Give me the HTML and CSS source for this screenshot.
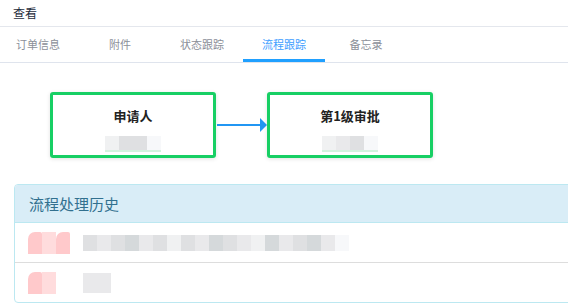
FILE: index.html
```html
<!DOCTYPE html>
<html>
<head>
    <title>查看</title>
    <link rel="stylesheet" href="styles.css">
</head>
<body>
    <div class="dialog-title">查看</div>

    <!-- 标签页 -->
    <div class="tabs">
        <div class="tab">订单信息</div>
        <div class="tab">附件</div>
        <div class="tab">状态跟踪</div>
        <div class="tab active">流程跟踪</div>
        <div class="tab">备忘录</div>
    </div>

    <!-- 流程图 -->
    <div class="flow">
        <div class="node">
            <div class="node-name">申请人</div>
            <div class="mosaic small">
                <span class="m3"></span><span class="m1"></span><span class="m1"></span><span class="m4"></span>
            </div>
        </div>
        <svg class="arrow" width="51" height="16" viewBox="0 0 51 16">
            <line x1="1" y1="8" x2="44" y2="8" stroke="#2196f3" stroke-width="2"/>
            <path d="M44 1 L51 8 L44 15 Z" fill="#2196f3"/>
        </svg>
        <div class="node">
            <div class="node-name">第1级审批</div>
            <div class="mosaic small">
                <span class="m3"></span><span class="m2"></span><span class="m1"></span><span class="m4"></span>
            </div>
        </div>
    </div>

    <!-- 流程处理历史 -->
    <div class="panel">
        <div class="panel-heading">流程处理历史</div>
        <div class="panel-row">
            <div class="avatar"><span></span><span class="light"></span><span></span></div>
            <div class="mosaic line">
                <span class="m1"></span><span class="m2"></span><span class="m1"></span><span class="m5"></span>
                <span class="m2"></span><span class="m1"></span><span class="m3"></span><span class="m1"></span>
                <span class="m2"></span><span class="m5"></span><span class="m1"></span><span class="m2"></span>
                <span class="m3"></span><span class="m5"></span><span class="m2"></span><span class="m1"></span>
                <span class="m5"></span><span class="m2"></span><span class="m4"></span>
            </div>
        </div>
        <div class="panel-row">
            <div class="avatar"><span></span><span class="light"></span></div>
            <div class="mosaic short">
                <span class="m2"></span><span class="m2"></span>
            </div>
        </div>
    </div>
</body>
</html>
```
FILE: styles.css
```css
body {
    margin: 0;
    background-color: #fff;
    font-family: "Noto Sans CJK SC", "Liberation Sans", sans-serif;
    color: #303133;
    overflow: hidden;
}

.dialog-title {
    height: 26px;
    line-height: 26px;
    padding-left: 13px;
    font-size: 12px;
    color: #1f2d3d;
    border-bottom: 1px solid #e4e7ed;
}

.tabs {
    display: flex;
    margin-left: -3px;
    height: 35px;
    border-bottom: 1px solid #dfe4ed;
}

.tab {
    width: 82px;
    text-align: center;
    font-size: 11px;
    line-height: 34px;
    color: #8b8f99;
    box-sizing: border-box;
}

.tab.active {
    color: #409eff;
    border-bottom: 3px solid #20a0ff;
}

.flow {
    display: flex;
    align-items: center;
    padding: 29px 0 0 50px;
}

.node {
    width: 166px;
    height: 66px;
    box-sizing: border-box;
    border: 3px solid #17cf64;
    border-radius: 3px;
    box-shadow: 0 1px 4px rgba(0, 0, 0, 0.12);
    display: flex;
    flex-direction: column;
    align-items: center;
}

.node-name {
    margin-top: 11px;
    font-size: 13px;
    font-weight: bold;
    color: #222;
}

.arrow {
    display: block;
}

.mosaic {
    display: flex;
}

.mosaic span {
    display: block;
    width: 14px;
    height: 14px;
}

.mosaic.small {
    margin-top: 11px;
    border-bottom: 2px solid #d3f2de;
}

.m1 { background: #dfe0e2; }
.m2 { background: #e9e9eb; }
.m3 { background: #f0f1f2; }
.m4 { background: #f7f8fa; }
.m5 { background: #d5d9db; }

.panel {
    margin: 26px 0 0 14px;
    width: 600px;
    border: 1px solid #bce8f1;
    border-radius: 4px;
    overflow: hidden;
}

.panel-heading {
    height: 37px;
    line-height: 37px;
    padding-left: 14px;
    font-size: 15px;
    color: #31708f;
    background-color: #d9edf7;
    border-bottom: 1px solid #bce8f1;
}

.panel-row {
    height: 39px;
    display: flex;
    align-items: center;
    padding-left: 13px;
    border-bottom: 1px solid #ddd;
}

.panel-row:last-child {
    border-bottom: none;
}

.avatar {
    display: flex;
    width: 55px;
}

.avatar span {
    display: block;
    width: 14px;
    height: 22px;
    background: #ffc9cb;
    border-radius: 7px 2px 0 0;
}

.avatar span.light {
    background: #ffdcdd;
    border-radius: 0;
}

.mosaic.line span {
    height: 16px;
}

.mosaic.short span {
    height: 20px;
}
```
